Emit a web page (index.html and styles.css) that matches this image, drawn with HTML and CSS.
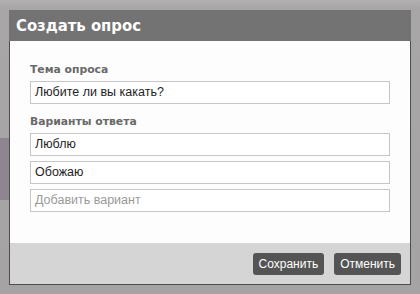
FILE: index.html
```html
<!DOCTYPE html>
<html lang="ru">
<head>
<meta charset="utf-8">
<title>Создать опрос</title>
<link rel="stylesheet" href="styles.css">
</head>
<body>
<div class="modal">
  <div class="modal-header">Создать опрос</div>
  <div class="modal-body">
    <div class="label">Тема опроса</div>
    <div class="field">Любите ли вы какать?</div>
    <div class="label label-second">Варианты ответа</div>
    <div class="options">
      <div class="field">Люблю</div>
      <div class="field">Обожаю</div>
      <div class="field placeholder">Добавить вариант</div>
    </div>
  </div>
  <div class="modal-footer">
    <button class="btn">Сохранить</button>
    <button class="btn">Отменить</button>
  </div>
</div>
</body>
</html>
```
FILE: styles.css
```css
html, body {
  margin: 0;
  padding: 0;
}
body {
  width: 420px;
  height: 294px;
  overflow: hidden;
  box-sizing: border-box;
  padding: 10px 0 0 9px;
  background:
    linear-gradient(to bottom, transparent 0, transparent 138px, #8f8590 138px, #8f8590 200px, transparent 200px) left top / 9px 294px no-repeat,
    linear-gradient(to bottom, #b3b0b1 0, #a9a6a7 8px, #a6a3a4 100%);
  font-family: "Liberation Sans", Arial, sans-serif;
}
.modal {
  width: 402px;
  box-sizing: border-box;
  border: 1px solid #4d4d4d;
  border-top: 0;
  background: #fdfdfd;
}
.modal-header {
  height: 31px;
  margin: 0 -1px;
  background: #737373;
  color: #ffffff;
  font-family: "DejaVu Sans Condensed", "DejaVu Sans", Verdana, sans-serif;
  font-stretch: condensed;
  font-weight: bold;
  font-size: 16.5px;
  line-height: 31px;
  padding-left: 7px;
}
.modal-body {
  padding: 22px 20px 31px 20px;
  display: flex;
  flex-direction: column;
}
.label {
  font-family: "DejaVu Sans", Verdana, sans-serif;
  font-weight: bold;
  font-size: 10.8px;
  line-height: 14px;
  color: #696969;
  margin-bottom: 4px;
}
.label-second {
  margin-top: 11px;
}
.options {
  display: flex;
  flex-direction: column;
  gap: 5px;
}
.field {
  height: 23px;
  box-sizing: border-box;
  border: 1px solid #c6c6c6;
  background: #ffffff;
  padding: 0 4px;
  font-size: 12.5px;
  line-height: 21px;
  color: #1e1e1e;
}
.placeholder {
  color: #9a9a9a;
}
.modal-footer {
  height: 41px;
  box-sizing: border-box;
  background: #d5d5d5;
  display: flex;
  justify-content: flex-end;
  align-items: center;
  gap: 10px;
  padding: 0 9px 0 0;
}
.btn {
  height: 22px;
  border: 0;
  border-radius: 3px;
  background: #545454;
  color: #ffffff;
  font-family: "Liberation Sans", Arial, sans-serif;
  font-size: 12px;
  padding: 0 6px;
  line-height: 22px;
}
```
